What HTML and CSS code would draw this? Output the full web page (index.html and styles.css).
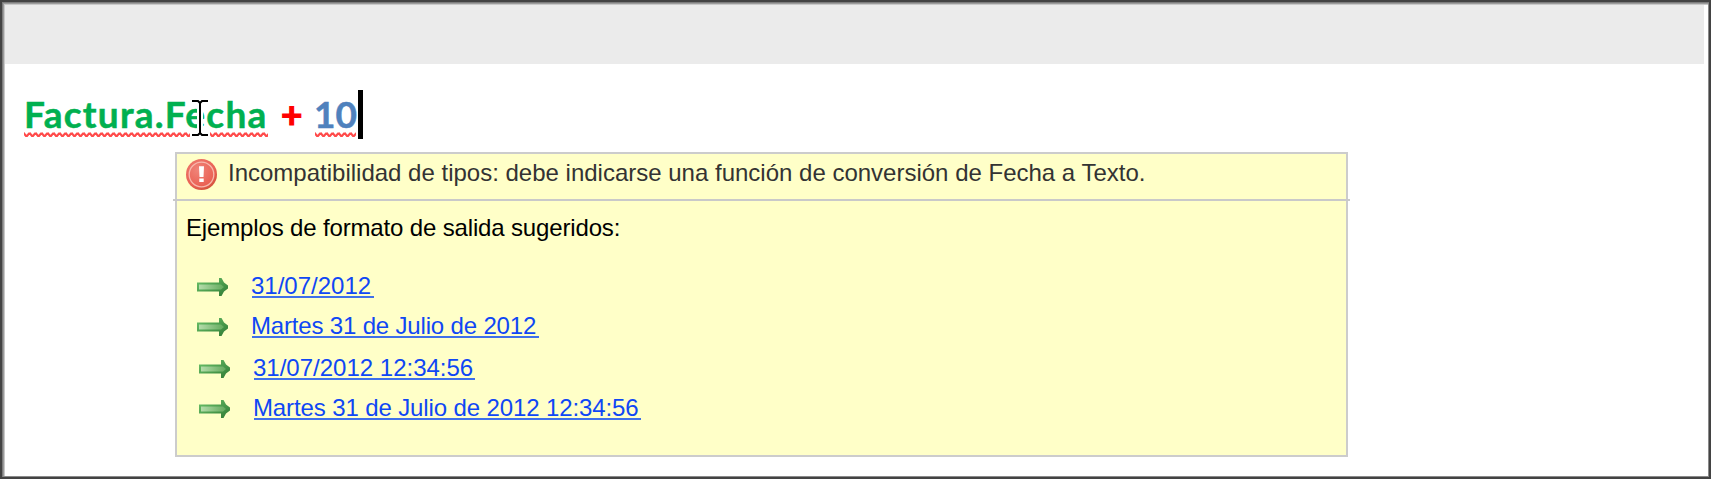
FILE: index.html
```html
<!DOCTYPE html>
<html lang="es">
<head>
<meta charset="utf-8">
<title>Editor de expresiones</title>
<link rel="stylesheet" href="styles.css">
</head>
<body>
<svg class="defs" width="0" height="0" aria-hidden="true">
  <defs>
    <linearGradient id="shaft" x1="0" y1="0" x2="1" y2="1"><stop offset="0" stop-color="#6cc46a"/><stop offset="1" stop-color="#2f7a34"/></linearGradient>
    <linearGradient id="shine" x1="0" y1="0" x2="1" y2="0"><stop offset="0" stop-color="#b4dcaa"/><stop offset="1" stop-color="#62a95c"/></linearGradient>
    <radialGradient id="ball" cx=".4" cy=".35" r=".75"><stop offset="0" stop-color="#f0857a"/><stop offset=".7" stop-color="#ea6255"/><stop offset="1" stop-color="#c8492f"/></radialGradient>
    <pattern id="wave" width="6" height="6" patternUnits="userSpaceOnUse"><path d="M-1 .5L0 1.5L2 4L3 4L5 1.5L6 1.5L7 2.5" fill="none" stroke="#ff4a4a" stroke-width="2.2"/></pattern>
    <symbol id="arrow" viewBox="0 0 31 18"><path d="M0 4.5H22V0H24.5L27 4.5L31 7.5V10.5L27 13.5L24.5 18H22V13.5H0Z" fill="url(#shaft)"/><path d="M2 6.5H24L27 9L24 11.5H2Z" fill="url(#shine)"/></symbol>
  </defs>
</svg>
<main class="window">
  <header class="toolbar"></header>
  <section class="code">
    <span class="token field">Factura.Fecha<svg class="squiggle"><rect width="100%" height="6" fill="url(#wave)"/></svg>
      <svg class="ibeam" viewBox="0 0 16 36"><path d="M0 0H7V2H9V0H16V3H9V33H16V36H9V34H7V36H0V33H7V3H0Z" fill="#fff" stroke="#fff" stroke-width="4"/><path d="M0 1H6L8 3L10 1H16M8 2V34M0 35H6L8 33L10 35H16" fill="none" stroke="#000" stroke-width="2"/></svg>
    </span>
    <span class="token plus">+</span>
    <span class="token number">10<svg class="squiggle"><rect width="100%" height="6" fill="url(#wave)"/></svg></span>
    <span class="caret"></span>
  </section>
  <section class="hint">
    <div class="message">
      <svg class="error" viewBox="0 0 31 31"><circle cx="15.5" cy="15.5" r="15.5" fill="url(#ball)"/><circle cx="15.5" cy="15.5" r="12.3" fill="none" stroke="#f7b8ad" stroke-width="1.3"/><path d="M13 7.2H18L17.5 18H13.5ZM13.3 19.5H17.7V23H13.3Z" fill="#fff"/></svg>
      <span class="message-text">Incompatibilidad de tipos: debe indicarse una función de conversión de Fecha a Texto.</span>
    </div>
    <div class="body">
      <p class="title">Ejemplos de formato de salida sugeridos:</p>
      <ul class="options">
        <li><svg class="arrow"><use href="#arrow"/></svg><a class="link date">31/07/2012</a></li>
        <li><svg class="arrow"><use href="#arrow"/></svg><a class="link long-date">Martes 31 de Julio de 2012</a></li>
        <li class="timed"><svg class="arrow"><use href="#arrow"/></svg><a class="link date-time">31/07/2012 12:34:56</a></li>
        <li class="timed last"><svg class="arrow"><use href="#arrow"/></svg><a class="link long-date-time">Martes 31 de Julio de 2012 12:34:56</a></li>
      </ul>
    </div>
  </section>
</main>
</body>
</html>
```
FILE: styles.css
```css
* { box-sizing: border-box; }
body { margin: 0; background: #fff; font-family: "Liberation Sans", Arial, sans-serif; }
.defs { position: absolute; }
.window {
  width: 1711px; height: 479px; overflow: hidden;
  border: 2px solid #434343;
  box-shadow: inset 1px 1px #7d7d7d, inset -1px -1px #8a8a8a, inset 2px 2px #9b9b9b, inset 3px 3px #c9c9c9;
  padding: 3px 5px 0 3px;
}
.toolbar { height: 59px; background: #ebebeb; }
.code {
  display: flex; align-items: flex-start;
  height: 88px; padding: 26px 0 0 19px;
  font: 700 37px/48px Lato, sans-serif;
}
.token { position: relative; display: block; height: 48px; white-space: nowrap; }
.field { width: 244px; color: #00b050; letter-spacing: 1.25px; -webkit-text-stroke: .5px #00b050; }
.plus { width: 20px; margin-left: 13px; color: #f00; -webkit-text-stroke: 1.2px #f00; }
.number { width: 41px; margin-left: 14px; color: #4f81bd; text-indent: -1px; -webkit-text-stroke: .5px #4f81bd; }
.squiggle { position: absolute; left: 0; top: 42px; width: 100%; height: 6px; }
.ibeam { position: absolute; left: 168px; top: 10px; width: 16px; height: 36px; overflow: visible; }
.caret { width: 5px; height: 49px; background: #000; margin-left: 2px; }
.hint {
  width: 1173px; height: 305px; margin-left: 170px;
  background: #ffffc8; border: 2px solid #ccc;
}
.message {
  display: flex; align-items: flex-start;
  height: 47px; margin: 0 -4px; padding: 5px 0 0 13px;
  border-bottom: 2px solid #c9c9c9;
}
.error { width: 31px; height: 31px; margin-right: 11px; }
.message-text { font-size: 24px; line-height: 28px; color: #333; white-space: nowrap; }
.body { padding: 13px 0 0 9px; }
.title { margin: 0; font-size: 24px; line-height: 28px; color: #000; letter-spacing: -.15px; white-space: nowrap; }
.options {
  display: grid; grid-template-rows: 40px 42px 40px 40px;
  margin: 30px 0 0; padding: 0; list-style: none;
}
.options li { display: flex; align-items: flex-start; padding-left: 11px; }
.options .timed { padding-left: 13px; }
.arrow { width: 31px; height: 18px; margin: 6px 24px 0 0; }
.link {
  height: 26px; border-bottom: 2px solid #3f6fea; color: #0f47f5;
  font-size: 24px; line-height: 27px; text-indent: -1px; white-space: nowrap;
}
.date { width: 122px; }
.long-date { width: 287px; letter-spacing: -.17px; }
.date-time { width: 221px; }
.long-date-time { width: 387px; letter-spacing: -.12px; }
```
